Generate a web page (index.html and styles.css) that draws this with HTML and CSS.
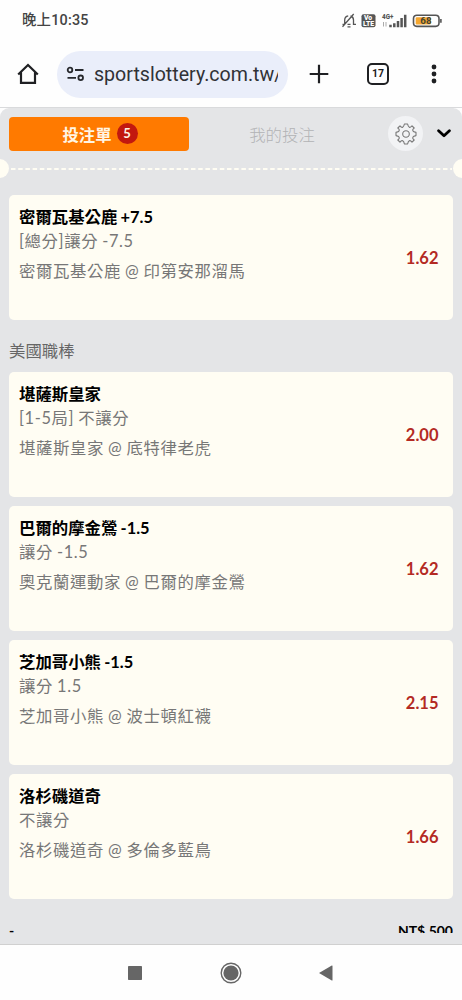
FILE: index.html
```html
<!DOCTYPE html>
<html lang="zh-Hant">
<head>
<meta charset="utf-8">
<title>投注單</title>
<link rel="stylesheet" href="styles.css">
</head>
<body>
<header class="status">
  <span class="clock">晚上10:35</span>
  <svg class="status-icons" width="104" height="18" viewBox="0 0 104 18" fill="none" stroke="#555">
    <path d="M1.500 12.300h2.200V8q0-3.500 3.500-4.200M9.500 4q3 .800 3 4v4.300h2.500M6.500 12.300h3M6.500 14.900h3M1.500 14.800 12.700 2" stroke-width="1.300"/>
    <rect x="20.500" y="2.300" width="14" height="13" rx="2" fill="#555" stroke="none"/>
    <text class="volte" x="27" y="8.300" text-anchor="middle">Vo</text>
    <text class="volte" x="27.600" y="14.300" text-anchor="middle">LTE</text>
    <text class="net" x="41" y="6.700">4G+</text>
    <path d="M42.500 14.500V10M45 10v4.500" stroke="#aaa" stroke-width="1"/>
    <path d="M49.500 15.300v-2.500M53.300 15.300v-4M57 15.300V9M60.600 15.300V6M64.200 15.300V2.800" stroke-width="2.500"/>
    <rect x="72.500" y="3.200" width="25.500" height="11.200" rx="3.300" stroke-width="1.600"/>
    <rect x="74.700" y="5.200" width="15" height="7.200" rx="1.200" fill="#f5a72f" stroke="none"/>
    <path d="M99.900 7v3.700" stroke-width="1.600"/>
    <text class="charge" x="84.900" y="12.400" text-anchor="middle">68</text>
  </svg>
</header>
<nav class="browser">
  <svg class="home" width="22" height="22" viewBox="0 0 22 22" fill="none" stroke="#1f2023" stroke-width="2.200"><path d="M1.200 11.500 11 2l9.800 9.500M4 9.500v10.300h14V9.500"/></svg>
  <div class="address">
    <svg width="20" height="16" viewBox="0 0 20 16" fill="none" stroke="#26282c" stroke-width="1.800"><circle cx="4" cy="4" r="2.300"/><circle cx="14.700" cy="11.800" r="2.300"/><path d="M9 4h8.500M1.500 11.800H10"/></svg>
    <span class="url">sportslottery.com.tw/</span>
  </div>
  <svg class="plus" width="20" height="20" viewBox="0 0 20 20" stroke="#1f2023" stroke-width="2.200"><path d="M.7 10h18.600M10 .7v18.600"/></svg>
  <span class="tabcount">17</span>
  <svg class="more" width="6" height="20" viewBox="0 0 6 20" fill="#1f2023"><circle cx="3" cy="3" r="2.400"/><circle cx="3" cy="10" r="2.400"/><circle cx="3" cy="17" r="2.400"/></svg>
</nav>
<main class="slip">
  <div class="sheet">
  <div class="tabs">
    <div class="tab active">投注單<span class="badge">5</span></div>
    <div class="tab">我的投注</div>
    <div class="gear"><svg width="22" height="22" viewBox="-11 -11 22 22" fill="none" stroke="#777" stroke-width="1.100" stroke-linejoin="round"><circle r="3.300"/><path d="M-1.600-10h3.200Q2-7.400 3.300-6.800T6-8.200L8.200-6Q6.200-4.500 6.800-3.300T10-1.600v3.200Q7.400 2 6.800 3.300T8.200 6L6 8.200Q4.500 6.200 3.300 6.800T1.600 10h-3.200Q-2 7.400-3.300 6.800T-6 8.200L-8.200 6Q-6.200 4.500-6.800 3.300T-10 1.600v-3.200Q-7.400-2-6.800-3.300T-8.200-6L-6-8.200Q-4.500-6.200-3.300-6.800T-1.600-10z"/></svg></div>
    <svg class="chevron" width="14" height="9" viewBox="0 0 14 9" fill="none" stroke="#000" stroke-width="2.800" stroke-linecap="round" stroke-linejoin="round"><path d="M1.600 1.700 7 6.700l5.400-5"/></svg>
  </div>
  <div class="tear"><i class="notch"></i><svg class="dashes" width="442" height="2" viewBox="0 0 442 2"><path d="M1 1H442" stroke="#fffdf3" stroke-width="2" stroke-dasharray="4.500 2.700"/></svg><i class="notch"></i></div>
  <section class="bets first">
    <article class="card"><div><h2>密爾瓦基公鹿 +7.5</h2><p class="market">[總分]讓分 -7.5</p><p class="teams">密爾瓦基公鹿 @ 印第安那溜馬</p></div><span class="odds">1.62</span></article>
  </section>
  <h1>美國職棒</h1>
  <section class="bets">
    <article class="card"><div><h2>堪薩斯皇家</h2><p class="market">[1-5局] 不讓分</p><p class="teams">堪薩斯皇家 @ 底特律老虎</p></div><span class="odds">2.00</span></article>
    <article class="card"><div><h2>巴爾的摩金鶯 -1.5</h2><p class="market">讓分 -1.5</p><p class="teams">奧克蘭運動家 @ 巴爾的摩金鶯</p></div><span class="odds">1.62</span></article>
    <article class="card"><div><h2>芝加哥小熊 -1.5</h2><p class="market">讓分 1.5</p><p class="teams">芝加哥小熊 @ 波士頓紅襪</p></div><span class="odds">2.15</span></article>
    <article class="card"><div><h2>洛杉磯道奇</h2><p class="market">不讓分</p><p class="teams">洛杉磯道奇 @ 多倫多藍鳥</p></div><span class="odds">1.66</span></article>
  </section>
  <div class="total"><span>-</span><span>NT$ 500</span></div>
  </div>
</main>
<footer class="system">
  <svg width="14" height="14" viewBox="0 0 14 14"><rect width="14" height="14" rx=".7" fill="#666"/></svg>
  <svg width="22" height="22" viewBox="0 0 22 22"><circle cx="11" cy="11" r="9.800" fill="none" stroke="#666" stroke-width="1.400"/><circle cx="11" cy="11" r="7.600" fill="#666"/></svg>
  <svg width="14" height="16" viewBox="0 0 14 16"><path d="M0 8 12.800.6q.7-.3.700.500v13.800q0 .8-.7.500z" fill="#666"/></svg>
</footer>
</body>
</html>
```
FILE: styles.css
```css
* { box-sizing: border-box; }
body { margin: 0; width: 462px; height: 1000px; overflow: hidden; display: flex; flex-direction: column; background: #fefefe; font-family: Lato, "Noto Sans CJK TC", sans-serif; }
h1, h2, p { margin: 0; }
svg { display: block; flex: none; }
.status { height: 41px; flex: none; display: flex; justify-content: space-between; align-items: center; padding: 1px 17px 0 22px; }
.clock { font: 500 14.4px/20px Roboto, "Noto Sans CJK TC", sans-serif; color: #444; letter-spacing: .2px; }
.status-icons { font-family: Roboto, sans-serif; font-weight: 900; }
.volte { font-size: 6.8px; fill: #fff; stroke: none; }
.net { font-size: 6.3px; fill: #555; stroke: none; }
.charge { font-size: 9.8px; font-weight: 700; fill: #443; stroke: none; }
.browser { height: 66px; flex: none; display: flex; align-items: center; padding-left: 17px; }
.address { width: 231px; height: 47px; margin-left: 18px; border-radius: 24px; background: #eaeefa; display: flex; align-items: center; padding-left: 9px; }
.url { width: 184px; margin-left: 8px; padding-top: 2px; overflow: hidden; white-space: nowrap; font: 400 19.6px/28px Roboto, sans-serif; color: #303236; }
.plus { margin-left: 21px; }
.tabcount { width: 22px; height: 22px; margin-left: 38px; border: 2.2px solid #1f2023; border-radius: 5px; text-align: center; font: 700 10.5px/18px Roboto, sans-serif; color: #1f2023; }
.more { margin-left: 42px; }
.slip { height: 838px; flex: none; overflow: hidden; border-top: 1px solid #d9dadc; border-bottom: 1px solid #d0d0d0; }
.sheet { height: 836px; border-radius: 9px 9px 0 0; background: #e4e5e7; overflow: hidden; }
.tabs { display: flex; align-items: center; padding: 8px 0 0 9px; height: 43px; }
.tab { width: 180px; height: 34px; display: flex; align-items: center; justify-content: center; gap: 5px; color: #b2b3b5; font-size: 16.4px; font-weight: 300; }
.tab.active { padding-left: 2px; border-radius: 4px; background: #ff7a00; color: #fff5e4; font-weight: 700; }
.tab:nth-child(2) { width: 186px; }
.badge { width: 21px; height: 21px; border-radius: 50%; background: #c2180f; text-align: center; font-size: 13px; line-height: 21px; }
.gear { width: 35px; height: 35px; margin-left: 13px; border-radius: 50%; background: #f2f3f5; display: flex; align-items: center; justify-content: center; }
.chevron { margin-left: 14px; }
.tear { height: 19px; margin: 8px -10px 0; display: flex; align-items: center; justify-content: space-between; }
.notch { width: 19px; height: 19px; border-radius: 50%; background: #fffdf3; }
.bets { padding: 0 9px; display: grid; gap: 9.100px; }
.bets.first { margin-top: 17px; }
.card { height: 125px; border-radius: 5px; padding: 10px 14.500px 0 10px; background: #fffdf3; display: flex; justify-content: space-between; }
h2 { font-size: 16.4px; line-height: 24px; font-weight: 700; color: #000; word-spacing: -.8px; }
.market, .teams { font-size: 16.400px; line-height: 24px; font-weight: 400; color: #777; letter-spacing: .6px; word-spacing: -.7px; }
.teams { margin-top: 6px; }
.odds { align-self: flex-start; margin-top: 40.500px; font-size: 16.500px; line-height: 24px; font-weight: 700; color: #b42a23; }
h1 { height: 52px; padding: 19px 9px 0; font-size: 16.400px; line-height: 24px; font-weight: 400; color: #666; }
.total { height: 10px; margin: 24px 9px 0; overflow: hidden; display: flex; justify-content: space-between; font-size: 14px; line-height: 15px; font-weight: 700; color: #000; }
.system { height: 55px; display: flex; align-items: center; padding-left: 128px; gap: 77.500px; }
```
